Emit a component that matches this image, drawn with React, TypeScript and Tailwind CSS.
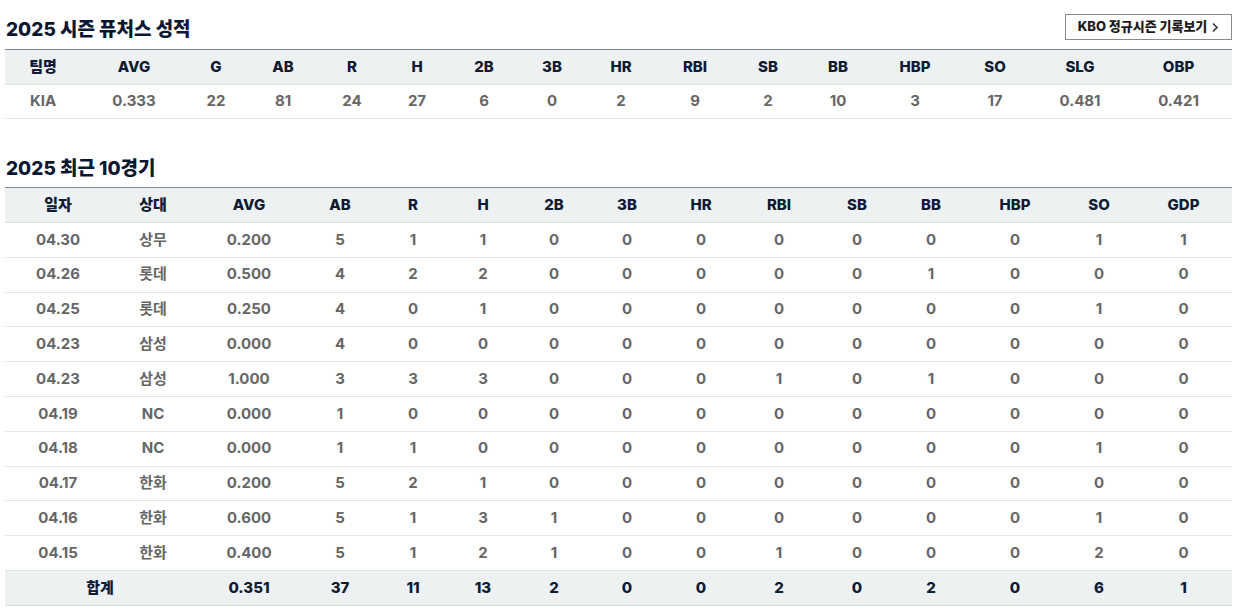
const font = "font-['Inter','Noto_Sans_CJK_KR',sans-serif]";

const seasonCols = [76, 106, 58, 76, 62, 68, 66, 70, 68, 80, 66, 74, 80, 80, 90, 107];
const seasonHead = ["팀명", "AVG", "G", "AB", "R", "H", "2B", "3B", "HR", "RBI", "SB", "BB", "HBP", "SO", "SLG", "OBP"];
const seasonRow = ["KIA", "0.333", "22", "81", "24", "27", "6", "0", "2", "9", "2", "10", "3", "17", "0.481", "0.421"];

const recentCols = [106, 84, 108, 74, 72, 68, 74, 72, 76, 80, 76, 72, 96, 72, 97];
const recentHead = ["일자", "상대", "AVG", "AB", "R", "H", "2B", "3B", "HR", "RBI", "SB", "BB", "HBP", "SO", "GDP"];
const recentRows = [
  ["04.30", "상무", "0.200", "5", "1", "1", "0", "0", "0", "0", "0", "0", "0", "1", "1"],
  ["04.26", "롯데", "0.500", "4", "2", "2", "0", "0", "0", "0", "0", "1", "0", "0", "0"],
  ["04.25", "롯데", "0.250", "4", "0", "1", "0", "0", "0", "0", "0", "0", "0", "1", "0"],
  ["04.23", "삼성", "0.000", "4", "0", "0", "0", "0", "0", "0", "0", "0", "0", "0", "0"],
  ["04.23", "삼성", "1.000", "3", "3", "3", "0", "0", "0", "1", "0", "1", "0", "0", "0"],
  ["04.19", "NC", "0.000", "1", "0", "0", "0", "0", "0", "0", "0", "0", "0", "0", "0"],
  ["04.18", "NC", "0.000", "1", "1", "0", "0", "0", "0", "0", "0", "0", "0", "1", "0"],
  ["04.17", "한화", "0.200", "5", "2", "1", "0", "0", "0", "0", "0", "0", "0", "0", "0"],
  ["04.16", "한화", "0.600", "5", "1", "3", "1", "0", "0", "0", "0", "0", "0", "1", "0"],
  ["04.15", "한화", "0.400", "5", "1", "2", "1", "0", "0", "1", "0", "0", "0", "2", "0"],
];
const recentTotal = ["0.351", "37", "11", "13", "2", "0", "0", "2", "0", "2", "0", "6", "1"];

function Cols({ widths }: { widths: number[] }) {
  return (
    <colgroup>
      {widths.map((w, i) => (
        <col key={i} style={{ width: w }} />
      ))}
    </colgroup>
  );
}

function HeadRow({ cells }: { cells: string[] }) {
  return (
    <thead>
      <tr className="bg-[#edf1f2] border-t border-[#7d8691] border-b border-b-[#dde1e4]">
        {cells.map((c) => (
          <th key={c} className="h-[35px] p-0 text-center text-[15px] font-extrabold text-[#0f1a33]">
            {c}
          </th>
        ))}
      </tr>
    </thead>
  );
}

export default function App() {
  return (
    <div className={`${font} bg-white w-[1236px] h-[615px] px-[5px] pt-[14px]`}>
      <div className="flex items-end justify-between w-[1227px]">
        <h2 className="pl-[1px] text-[19px] font-extrabold text-[#0a1733] leading-none pb-[1px]">2025 시즌 퓨처스 성적</h2>
        <button className="h-[26px] w-[167px] border border-[#8a8a8a] flex items-center justify-center gap-1 text-[13px] font-extrabold text-[#1b1b1b]">
          KBO 정규시즌 기록보기
          <svg width="8" height="11" viewBox="0 0 8 11" fill="none">
            <path d="M2 1.5 L6 5.5 L2 9.5" stroke="#333" strokeWidth="1.6" />
          </svg>
        </button>
      </div>

      <table className="mt-[9px] w-[1227px] table-fixed border-collapse">
        <Cols widths={seasonCols} />
        <HeadRow cells={seasonHead} />
        <tbody>
          <tr className="border-b border-[#e3e6e8]">
            {seasonRow.map((c, i) => (
              <td key={i} className="h-[34px] p-0 text-center text-[15px] font-bold text-[#666]">
                {c}
              </td>
            ))}
          </tr>
        </tbody>
      </table>

      <h2 className="mt-[40px] pl-[1px] text-[19px] font-extrabold text-[#0a1733] leading-none">2025 최근 10경기</h2>

      <table className="mt-[9px] w-[1227px] table-fixed border-collapse">
        <Cols widths={recentCols} />
        <HeadRow cells={recentHead} />
        <tbody>
          {recentRows.map((row, r) => (
            <tr key={r} className="border-b border-[#e3e6e8]">
              {row.map((c, i) => (
                <td key={i} className="h-[34.8px] p-0 text-center text-[15px] font-bold text-[#666]">
                  {c}
                </td>
              ))}
            </tr>
          ))}
          <tr className="bg-[#edf1f2] border-b border-[#d6dadd]">
            <td colSpan={2} className="h-[34.8px] p-0 text-center text-[15px] font-extrabold text-[#0f1a33]">
              합계
            </td>
            {recentTotal.map((c, i) => (
              <td key={i} className="h-[34.8px] p-0 text-center text-[15px] font-extrabold text-[#0f1a33]">
                {c}
              </td>
            ))}
          </tr>
        </tbody>
      </table>
    </div>
  );
}
